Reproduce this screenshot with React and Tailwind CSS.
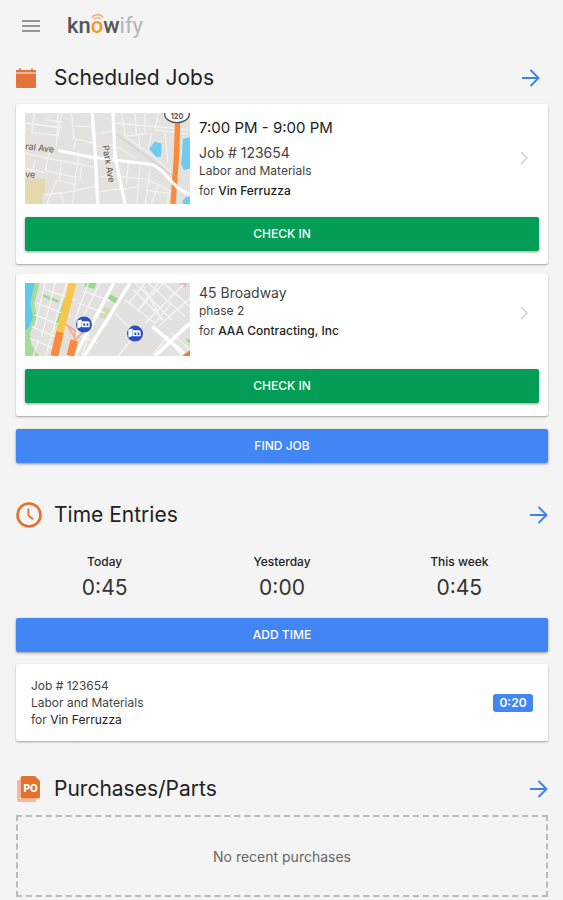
import React from 'react';

const stats = [
  { label: 'Today', value: '0:45' },
  { label: 'Yesterday', value: '0:00' },
  { label: 'This week', value: '0:45' },
];

const MenuIcon = () => (
  <svg width="18" height="12" viewBox="0 0 18 12" stroke="#777777" strokeWidth="1.6">
    <path d="M0 1h18M0 6h18M0 11h18" />
  </svg>
);

const CalendarIcon = () => (
  <svg width="20" height="20" viewBox="0 0 20 20" fill="#e2733a">
    <path d="M0 2h3V.5h2V2h10V.5h2V2h3v2.6H0z" />
    <path d="M0 5.4h20V19a1 1 0 0 1-1 1H1a1 1 0 0 1-1-1z" />
  </svg>
);

const ClockIcon = () => (
  <svg width="26" height="26" viewBox="0 0 26 26" fill="none" stroke="#e0712f">
    <circle cx="13" cy="13" r="11.5" strokeWidth="2.6" />
    <path d="M12.4 6.5v6.8l4.6 4" strokeWidth="1.8" />
  </svg>
);

const PurchaseIcon = () => (
  <svg width="26" height="28" viewBox="0 0 26 28">
    <path d="M1 5h3v18.500h16V27H3.500a2.500 2.500 0 0 1-2.500-2.500z" fill="#f2b99c" />
    <path d="M6.500 1H19l5 5v15.500a2 2 0 0 1-2 2H6.500a2 2 0 0 1-2-2V3a2 2 0 0 1 2-2z" fill="#e2702f" />
    <text x="14.500" y="16.500" textAnchor="middle" fontSize="10" fontWeight="800" fill="#ffffff">PO</text>
  </svg>
);

const ArrowIcon = () => (
  <svg width="18" height="18" viewBox="0 0 18 18" fill="none" stroke="#3f82ee" strokeWidth="1.9">
    <path d="M0 9h16.500M8.500 1l8 8-8 8" />
  </svg>
);

const ChevronIcon = () => (
  <svg width="8" height="14" viewBox="0 0 8 14" fill="none" stroke="#cccccc" strokeWidth="1.4">
    <path d="M1 1l6 6-6 6" />
  </svg>
);

const Logo = () => (
  <div className="relative font-[Roboto,sans-serif] text-[22px] leading-7 font-medium text-[#555555]">
    kn<span className="relative text-[#f7981d]">o
      <svg className="absolute top-0 left-0" width="13" height="7" viewBox="0 0 13 7" fill="none" stroke="#f7a45a" strokeWidth="1.3">
        <path d="M1 4.500C3.500.6 9.500.6 12 4.500M3.300 6.200c1.500-2 4.900-2 6.400 0" />
      </svg>
    </span>w<span className="font-normal text-[#b5b5b5]">ify</span>
  </div>
);

const ParkMap = () => (
  <svg className="h-[91px] w-[165px] shrink-0" viewBox="0 0 495 272" preserveAspectRatio="none">
    <rect width="495" height="272" fill="#e3e2df" />
    <path d="M0 196h60v44h-8v32H0z" fill="#e3d9ac" />
    <g fill="none" stroke="#f3f2f0" strokeWidth="4">
      <path d="M28 0l-8 58 80 10 10-68M62 20l50 8M100 0l-6 100M140 0l6 76 60 14M150 40h50M0 30l110 14M155 76l-10 30" />
      <path d="M0 120l100 22 110 20M75 112l-14 60 90 20 10-66M30 140l-10 50M0 165l60 14M110 142l-8 60 50 12M152 190l-10 82M150 232l62-14M60 245l90-12M95 200l-30 72M105 236l10 36M170 160l-6 40" />
      <path d="M230 60l40-8M222 100l48-6M228 190l40-6M230 235l55-8M270 30l220 20M290 0l10 70 60-8 0-62M330 0l4 66M400 0l-10 50 60 8M300 70l90 62 60 60M275 100l60 36M340 62l6 60M380 60l-12 60M420 60l8 90" />
      <path d="M290 190l80 10 60 30M310 150l-6 60M345 160l-10 112M375 170l-14 102M400 210l-20 62M280 230l60-10M360 230l70 10M435 230l-10 42M470 60l20 4M470 110l-14 60" />
    </g>
    <path d="M270 60l190 140" stroke="#d6d4d0" strokeWidth="5" fill="none" />
    <g fill="#6fcbf0">
      <path d="M372 106l18-20 20 6-2 38-14 2z" />
      <path d="M474 78l21-6v94l-18 4-8-16zM472 262l12-12h11v22h-20z" />
    </g>
    <path d="M458 26l-4 110-10 136" stroke="#fb8a3c" strokeWidth="16" fill="none" />
    <g fill="none" stroke="#ffffff">
      <path d="M202 0l8 110 8 162M264 0l6 130 30 142" strokeWidth="10" />
      <path d="M100 112l100 20 180 22c45 12 60 76 115 88" strokeWidth="9" />
    </g>
    <ellipse cx="456" cy="3" rx="37" ry="26" fill="#ffffff" stroke="#555555" strokeWidth="4" />
    <g fill="#555555" fontSize="27">
      <text x="456" y="17" textAnchor="middle" fontSize="22" fontWeight="700">120</text>
      <text transform="translate(0 108) rotate(7)">ral Ave</text>
      <text transform="translate(0 192) rotate(4)">ve</text>
      <text transform="translate(232 98) rotate(80)">Park Ave</text>
    </g>
  </svg>
);

const TrainPin = ({ x, y }) => (
  <g transform={`translate(${x} ${y})`}>
    <circle r="24" fill="#2a4fc4" />
    <path d="M-20-12l13-3v22l-13 5zM-6-10h18a5 5 0 0 1 5 5V8H-6z" fill="#ffffff" />
    <path d="M-2-3h6v7h-6zM8-3h5v7H8z" fill="#2a4fc4" />
  </g>
);

const BroadwayMap = () => (
  <svg className="h-[73px] w-[165px] shrink-0" viewBox="0 0 495 218" preserveAspectRatio="none">
    <rect width="495" height="218" fill="#e2e1df" />
    <path d="M0 0h44L28 60l8 50-22 40 6 36 22 32H0z" fill="#a4dd9b" />
    <path d="M0 0h28L16 62l8 40-14 34-10 4z" fill="#5fc8ee" />
    <g fill="#96da8c">
      <path d="M50 32l52 20-3 7-50-20zM124 32l8 2-34 92-8-3zM180 0h34l-5 18-30-8zM256 34l26 14-9 13-26-15zM485 165l10 5v10l-10-5z" />
    </g>
    <path d="M238 70l22 10-12 30-24-8z" fill="#cfdcae" />
    <path d="M460 0h28l-8 14z" fill="#efb7c6" />
    <g fill="none" stroke="#f6f5f3" strokeWidth="4">
      <path d="M60 0L30 130M90 0L50 160M125 0L62 218M36 60l100 40M30 95l95 38M20 130l80 34M15 165l70 30M60 20l90 30M40 170l-15 48" />
      <path d="M160 60l80 30M175 25l80 28M190 0l-40 110M225 0l-60 120M150 150l70 30M130 218l34-90M200 130l-30 88M270 90l60 60M280 60l-40 70" />
      <path d="M330 0l110 110M370 0l110 100M415 0l80 70M300 50l90 70M325 20l90 90M340 80l75-80M380 100l95-95M400 130l95-85M310 60l50-60M440 60l-50 60M350 0l60 110M450 30l-90 90M400 0l-60 80" />
      <path d="M350 130l-70 88M440 150l55 50M380 218l50-60M470 218l-50-60" />
    </g>
    <g fill="none" stroke="#ffffff">
      <path d="M266 0L150 218M315 0L178 218" strokeWidth="10" />
      <path d="M495 120l-105 98M382 130l95 80" strokeWidth="11" />
    </g>
    <path d="M120 122l30 20-2 44 8-8M130 132l20 32M174 146l-28 30" stroke="#f8a888" strokeWidth="5" fill="none" />
    <path d="M143 0L104 150" stroke="#f5c84d" strokeWidth="23" fill="none" />
    <path d="M105 147L88 218M148 172l-12 46" stroke="#fb8a3c" strokeWidth="23" fill="none" />
    <path d="M472 218l23-18v18z" fill="#fb7a2c" />
    <TrainPin x={177} y={124} />
    <TrainPin x={330} y={151} />
  </svg>
);

const SectionHeader = ({ icon, title, className = '' }) => (
  <div className={`flex h-[52px] items-center ${className}`}>
    <div className="w-[38px] shrink-0">{icon}</div>
    <h2 className="flex-1 text-[21px] leading-7 text-[#222222]">{title}</h2>
    <a href="#" aria-label={`Open ${title}`}>
      <ArrowIcon />
    </a>
  </div>
);

const ActionButton = ({ children, color }) => (
  <button type="button" className={`block h-[34px] w-full rounded-xs text-[12px] font-medium text-white shadow-[0_1px_3px_rgba(0,0,0,0.4)] ${color}`}>
    {children}
  </button>
);

const JobCard = ({ map, children }) => (
  <article className="rounded-xs bg-white px-[9px] pt-[9px] pb-[13px] shadow-[0_1px_2px_rgba(0,0,0,0.35)]">
    <div className="mb-[13px] flex items-start gap-[9px]">
      {map}
      <div className="flex flex-1 items-center justify-between pr-[11px]">
        <div className="text-[#444444]">{children}</div>
        <ChevronIcon />
      </div>
    </div>
    <ActionButton color="bg-[#039d55]">CHECK IN</ActionButton>
  </article>
);

const App = () => {
  return (
    <div className="min-h-screen bg-[#f4f4f4] pr-[15px] pb-[3px] pl-4 font-[Inter,sans-serif] text-[#222222]">
      <header className="flex h-[52px] items-center gap-[27px] pl-[6px]">
        <button type="button" aria-label="Menu">
          <MenuIcon />
        </button>
        <Logo />
      </header>

      <main>
        <section>
          <SectionHeader icon={<CalendarIcon />} title="Scheduled Jobs" className="pr-2" />
          <div className="space-y-[10px]">
            <JobCard map={<ParkMap />}>
              <p className="text-[15px] leading-[30px] text-[#222222]">7:00 PM - 9:00 PM</p>
              <p className="text-[14px] leading-5">Job # 123654</p>
              <p className="text-[12px] leading-4">Labor and Materials</p>
              <p className="text-[12px] leading-6">for <b className="font-medium text-[#222222]">Vin Ferruzza</b></p>
            </JobCard>
            <JobCard map={<BroadwayMap />}>
              <p className="text-[14px] leading-5">45 Broadway</p>
              <p className="text-[12px] leading-4">phase 2</p>
              <p className="text-[12px] leading-6">for <b className="font-medium text-[#222222]">AAA Contracting, Inc</b></p>
            </JobCard>
          </div>
          <div className="mt-[13px]">
            <ActionButton color="bg-[#4285f4]">FIND JOB</ActionButton>
          </div>
        </section>

        <section className="mt-[26px]">
          <SectionHeader icon={<ClockIcon />} title="Time Entries" />
          <dl className="mt-[11px] mb-[14px] grid grid-cols-3 text-center">
            {stats.map((stat) => (
              <div key={stat.label}>
                <dt className="text-[12px] leading-5 font-medium">{stat.label}</dt>
                <dd className="text-[21px] leading-8 text-[#333333]">{stat.value}</dd>
              </div>
            ))}
          </dl>
          <ActionButton color="bg-[#4285f4]">ADD TIME</ActionButton>
          <article className="mt-3 flex items-center justify-between rounded-xs bg-white px-[15px] py-[13px] shadow-[0_1px_2px_rgba(0,0,0,0.35)]">
            <div className="text-[12px] leading-[17px] text-[#444444]">
              <p>Job # 123654</p>
              <p>Labor and Materials</p>
              <p>for <span className="text-[#222222]">Vin Ferruzza</span></p>
            </div>
            <span className="w-10 rounded-[3px] bg-[#4285f4] text-center text-[12px] leading-[18px] font-semibold text-white">0:20</span>
          </article>
        </section>

        <section className="mt-[22px]">
          <SectionHeader icon={<PurchaseIcon />} title="Purchases/Parts" />
          <div className="flex h-[82px] items-center justify-center border-2 border-dashed border-[#bbbbbb] text-[14px] text-[#666666]">
            No recent purchases
          </div>
        </section>
      </main>
    </div>
  );
};

export default App;
